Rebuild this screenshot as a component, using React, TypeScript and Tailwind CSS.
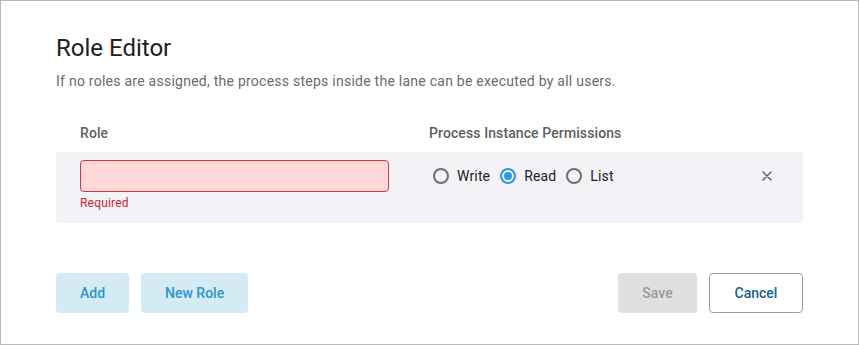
import React from "react";

function Radio({ checked, label }: { checked?: boolean; label: string }) {
  return (
    <label className="flex items-center mr-[10px]">
      <span
        className={
          "w-4 h-4 rounded-full border-2 flex items-center justify-center mr-2 " +
          (checked ? "border-[#2a9bd8]" : "border-[#6f6f6f]")
        }
      >
        {checked && <span className="w-2 h-2 rounded-full bg-[#2a9bd8]" />}
      </span>
      <span className="text-[14px] leading-5 tracking-[0.15px] text-[#222]">{label}</span>
    </label>
  );
}

export default function App() {
  return (
    <div
      className="w-[859px] h-[345px] border border-[#b9b9b9] bg-white px-[55px] pt-[31px] flex flex-col"
      style={{ fontFamily: "Roboto, 'Noto Sans', sans-serif" }}
    >
      <h1 className="text-[24px] leading-8 text-[#212121] font-normal">Role Editor</h1>
      <p className="mt-[7px] text-[14px] leading-5 tracking-[0.25px] text-[#6b6b6b]">
        If no roles are assigned, the process steps inside the lane can be executed by all users.
      </p>
      <div className="mt-[32px] flex pl-6 text-[14px] leading-5 tracking-[0.1px] font-medium text-[#5f5f5f]">
        <div className="w-[349px]">Role</div>
        <div>Process Instance Permissions</div>
      </div>
      <div className="mt-[9px] bg-[#f2f2f7] rounded pl-6 pr-6 pt-2 pb-3 flex items-start">
        <div className="w-[349px] flex flex-col">
          <div className="w-[309px] h-8 rounded border border-[#d6343a] bg-[#ffdad8]" />
          <div className="mt-[3px] text-[12px] leading-4 tracking-[0.2px] text-[#c8292f]">Required</div>
        </div>
        <div className="h-8 flex items-center pl-1">
          <Radio label="Write" />
          <Radio label="Read" checked />
          <Radio label="List" />
        </div>
        <div className="flex-1" />
        <div className="h-8 flex items-center mr-[7px]">
          <svg width="10" height="10" viewBox="0 0 10 10">
            <path d="M1 1L9 9M9 1L1 9" stroke="#5a5a5a" strokeWidth="1.4" strokeLinecap="round" />
          </svg>
        </div>
      </div>
      <div className="mt-[50px] flex items-center">
        <button className="h-10 px-6 rounded bg-[#d4eaf5] text-[#2f93cc] text-[14px] font-medium">
          Add
        </button>
        <button className="ml-3 h-10 px-6 rounded bg-[#d4eaf5] text-[#2f93cc] text-[14px] font-medium">
          New Role
        </button>
        <div className="flex-1" />
        <button className="h-10 w-[79px] rounded bg-[#e0e0e0] text-[#9a9a9a] text-[14px] font-medium">
          Save
        </button>
        <button className="ml-3 h-10 w-[94px] rounded border border-[#9a9a9a] bg-white text-[#14628f] text-[14px] font-medium">
          Cancel
        </button>
      </div>
    </div>
  );
}
